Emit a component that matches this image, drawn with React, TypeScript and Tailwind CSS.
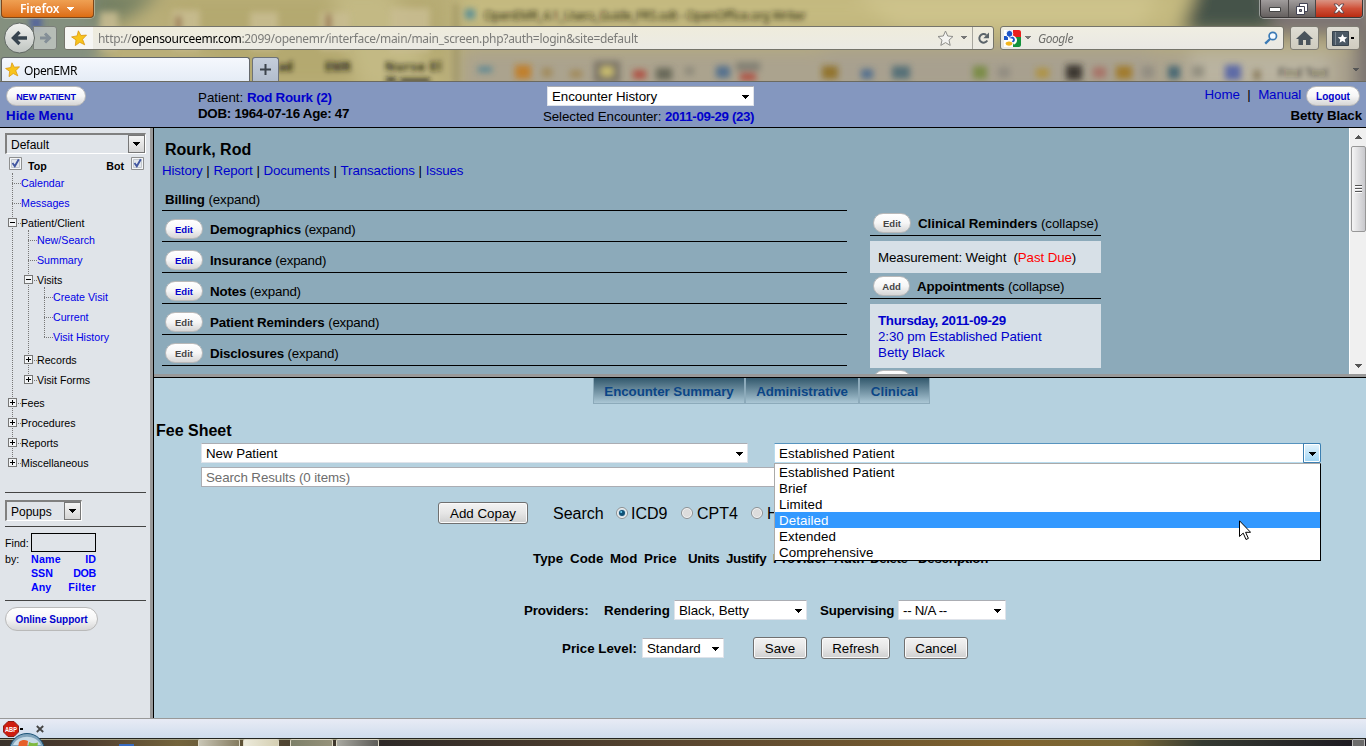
import type { ReactNode } from "react";
import clsx from "clsx";

type TreeNode = {
  label: string;
  link?: boolean;
  open?: boolean;
  children?: TreeNode[];
};

const menu: TreeNode[] = [
  { label: "Calendar", link: true },
  { label: "Messages", link: true },
  {
    label: "Patient/Client",
    open: true,
    children: [
      { label: "New/Search", link: true },
      { label: "Summary", link: true },
      {
        label: "Visits",
        open: true,
        children: [
          { label: "Create Visit", link: true },
          { label: "Current", link: true },
          { label: "Visit History", link: true },
        ],
      },
      { label: "Records", open: false },
      { label: "Visit Forms", open: false },
    ],
  },
  { label: "Fees", open: false },
  { label: "Procedures", open: false },
  { label: "Reports", open: false },
  { label: "Miscellaneous", open: false },
];

const sections = [
  { title: "Demographics", active: true },
  { title: "Insurance", active: true },
  { title: "Notes", active: true },
  { title: "Patient Reminders", active: false },
  { title: "Disclosures", active: false },
];

const visitLevels = ["Established Patient", "Brief", "Limited", "Detailed", "Extended", "Comprehensive"];

const Caret = ({ className }: { className?: string }) => (
  <svg className={clsx("shrink-0", className)} width="7" height="4" viewBox="0 0 7 4" shapeRendering="crispEdges">
    <path d="M0 0h7v1H0zM1 1h5v1H1zM2 2h3v1H2zM3 3h1v1H3z" fill="currentColor" />
  </svg>
);

const Star = ({ size }: { size: number }) => (
  <svg width={size} height={size} viewBox="0 0 16 16">
    <path
      d="M7.4.8l2.5 4.7 5.6-.4-4 4.200 2.200 5.500-4.900-2.500-4.500 3.300.7-5.700L.6 6.900l5.500-1z"
      fill="#f8c41c"
      stroke="#d9960c"
      strokeWidth=".8"
    />
  </svg>
);

const Pill = ({ children, className }: { children: ReactNode; className?: string }) => (
  <span
    className={clsx(
      "flex shrink-0 items-center justify-center whitespace-nowrap rounded-full border border-[#b9b9b9] bg-linear-to-b from-white via-[#f6f6f6] to-[#d6d6d6] font-bold",
      className,
    )}
  >
    {children}
  </span>
);

const Select = ({ children, className }: { children: ReactNode; className?: string }) => (
  <div
    className={clsx(
      "flex h-5 shrink-0 items-center justify-between rounded-[1px] border border-[#dfe3ea] border-t-[#abadb3] bg-white pr-1 pl-1 whitespace-nowrap",
      className,
    )}
  >
    <span className="pt-0.5 tracking-[-0.05px]">{children}</span>
    <Caret className="mt-px" />
  </div>
);

const Button = ({ children, className }: { children: ReactNode; className?: string }) => (
  <button
    className={clsx(
      "h-[22px] shrink-0 rounded-[3px] border border-[#707070] bg-linear-to-b from-[#f3f3f3] from-0% via-[#e6e6e6] via-50% to-[#cfcfcf] pt-px text-center leading-5 whitespace-nowrap shadow-[inset_0_0_0_1px_#fafafa]",
      className,
    )}
  >
    {children}
  </button>
);

const Radio = ({ checked, className }: { checked?: boolean; className?: string }) => (
  <svg className={clsx("shrink-0", className)} width="12" height="12" viewBox="0 0 12 12">
    <circle cx="6" cy="6" r="5.5" fill="#f4f4f4" stroke="#8b8f92" />
    <circle cx="6" cy="6" r="4" fill={checked ? "#c9dbe6" : "#dcdcdc"} />
    {checked && <circle cx="6" cy="6" r="3" fill="#0f5076" />}
    {checked && <circle cx="5.2" cy="5" r="1" fill="#6fd0f2" />}
  </svg>
);

const Check = () => (
  <svg width="13" height="13" viewBox="0 0 13 13">
    <path d="M.5.5h12v12H.5z" fill="#f4f6f8" stroke="#8e8f8f" />
    <path d="M2.5 2.5h8v8h-8z" fill="#e3e7ec" stroke="#c3c8ce" />
    <path d="M3.5 6l2.3 3.2L9.8 2.3" fill="none" stroke="#4257a0" strokeWidth="1.9" />
  </svg>
);

const Tree = ({ nodes, nested }: { nodes: TreeNode[]; nested?: boolean }) => (
  <ul className={clsx("relative", nested && "-mt-[3px] mb-[3px] ml-4")}>
    <li aria-hidden="true" className="absolute top-0 bottom-2.5 left-0 w-px border-l border-dotted border-[#777]" />
    {nodes.map((node) => (
      <li key={node.label}>
        <div className="relative flex h-5 items-center">
          <span className="w-[9px] border-t border-dotted border-[#777]" />
          {node.open !== undefined && (
            <svg className="absolute top-[5px] -left-1" width="9" height="9" viewBox="0 0 9 9" shapeRendering="crispEdges">
              <path d="M.5.5h8v8h-8z" fill="#f1f3f5" stroke="#777" />
              <path d={node.open ? "M2 4.5h5" : "M2 4.5h5M4.5 2v5"} stroke="#000" />
            </svg>
          )}
          <span className={clsx("whitespace-nowrap", node.link && "text-[#0000e6]")}>{node.label}</span>
        </div>
        {node.children && <Tree nodes={node.children} nested />}
      </li>
    ))}
  </ul>
);

// Aero glass: whatever sits behind the window, heavily blurred
const Glass = () => (
  <svg className="absolute inset-0" width="1366" height="82" viewBox="0 0 1366 82">
    <defs>
      <filter id="soft" x="-20%" y="-50%" width="140%" height="200%">
        <feGaussianBlur stdDeviation="9" />
      </filter>
      <filter id="smudge" x="-20%" y="-50%" width="140%" height="200%">
        <feGaussianBlur stdDeviation="3" />
      </filter>
      <filter id="type" x="-20%" y="-50%" width="140%" height="200%">
        <feGaussianBlur stdDeviation="2.6" />
      </filter>
    </defs>
    <path d="M0 0h1366v82H0z" fill="#b9ae78" />
    <g filter="url(#soft)">
      <path d="M-20-20H110L95 100H-20z" fill="#84907f" />
      <path d="M90-10h75l-40 30H90z" fill="#737f62" />
      <path d="M160 0h280v82H230z" fill="#b4a970" />
      <path d="M330-10h60l50 100h-80z" fill="#c3b984" />
      <path d="M460-10h740v40H460z" fill="#c5ba80" />
      <path d="M850-10h310l-20 40H900z" fill="#cdc38b" />
      <path d="M460 48h900v50H460z" fill="#aba38e" />
      <path d="M820 46h330v50H840z" fill="#a8a08f" />
      <path d="M1200-20h90v52h-110z" fill="#455349" />
      <path d="M1265-20h110v56h-100z" fill="#7b7373" />
      <path d="M1190 50h140v40h-140z" fill="#b9b3a0" />
      <path d="M1355 30h30v70h-30z" fill="#77706e" />
    </g>
    <g filter="url(#smudge)" opacity=".85">
      <path d="M30 16h12v14H30z" fill="#5060a0" />
      <path d="M100 12h18v38h-18zM172 10h28v40h-28zM250 12h28v38h-28zM320 12h30v38h-30zM390 8h40v44h-40z" fill="#c9bd92" />
      <path d="M176 16h5v26h-5zM326 14h5v28h-5z" fill="#8c5a35" />
      <path d="M465 9h10v10h-10z" fill="#4d8a9a" />
      <path d="M456 4v80" stroke="#8d8455" strokeWidth="3" />
      <path d="M478 67h14v5h-14z" fill="#3f7f96" />
      <path d="M515 65h16v14h-16z" fill="#c47a1b" />
      <path d="M542 68h10v9h-10zM570 70h12v8h-12z" fill="#a08652" />
      <path d="M594 61h26v22h-26z" fill="#736d60" />
      <path d="M601 67h12v9h-12z" fill="#d3c56a" />
      <path d="M633 70h13v9h-13zM740 73h16v8h-16z" fill="#b04438" />
      <path d="M736 62h24v9h-24z" fill="#7c7a70" />
      <path d="M656 68h16v12h-16z" fill="#5d5f51" />
      <path d="M685 67h9v8h-9z" fill="#888577" />
      <path d="M716 66h14v12h-14zM861 69h12v10h-12z" fill="#46698f" />
      <path d="M822 66h16v13h-16z" fill="#8e6d1d" />
      <path d="M892 66h18v13h-18z" fill="#496975" />
      <path d="M973 66h14v13h-14z" fill="#73893a" />
      <path d="M998 67h12v11h-12zM1142 66h12v12h-12z" fill="#8f8a80" />
      <path d="M1036 68h13v10h-13z" fill="#b09238" />
      <path d="M1066 65h16v15h-16z" fill="#2a2823" />
      <path d="M1093 67h13v11h-13z" fill="#a86d62" />
      <path d="M1116 66h16v13h-16z" fill="#a0761b" />
      <path d="M1168 66h12v13h-12z" fill="#3a6070" />
      <path d="M1192 66h12v11h-12z" fill="#8d8a7b" />
      <path d="M1225 65h16v15h-16z" fill="#4d5da8" />
      <path d="M1254 70h6v10h-6z" fill="#7b6a4a" />
    </g>
    <g filter="url(#type)" fontFamily="Noto Sans" fontSize="12" fill="#1f1c10">
      <text x="484" y="20" textLength="322">OpenEMR_4.1_Users_Guide_FR5.odt - OpenOffice.org Writer</text>
      <text x="278" y="71" fontWeight="bold">ad</text>
      <text x="325" y="71" fontWeight="bold">EMR</text>
      <text x="385" y="71" fontWeight="bold" textLength="56">Nurse El</text>
      <path d="M386 77h10v6h-10zM400 78h30v5h-30z" opacity=".7" />
      <text x="1278" y="77" opacity=".7">Find Text</text>
    </g>
  </svg>
);

const BrowserChrome = () => (
  <div className="relative h-[82px] shrink-0 overflow-hidden border-b border-[#6b6a60] font-['Noto_Sans','Open_Sans',sans-serif]">
    <Glass />
    <div className="relative flex h-full flex-col">
      <div className="flex h-[26px] items-start justify-between pr-[3px] pl-px">
        <div className="flex h-[18px] w-[93px] items-center rounded-b-[4px] border border-t-0 border-[#7d471b] bg-linear-to-b from-[#efa052] to-[#dd6d10] pl-[18px] text-[12px] font-semibold text-white shadow-[0_0_0_1px_#d8cfb088]">
          <span className="w-[47px] tracking-[-0.1px]">Firefox</span>
          <Caret />
        </div>
        <div className="flex h-[18px] w-[103px] overflow-hidden rounded-b-[4px] border border-t-0 border-[#3b3838] shadow-[0_0_0_1px_#ddd8]">
          <span className="flex w-7 items-center justify-center border-r border-[#4a4646] bg-linear-to-b from-[#a09c9c] to-[#65605f]">
            <svg width="12" height="6" viewBox="0 0 12 6"><path d="M.5 1.5h11v4H.5z" fill="#fff" stroke="#444" /></svg>
          </span>
          <span className="flex w-[27px] items-center justify-center border-r border-[#4a4646] bg-linear-to-b from-[#a09c9c] to-[#65605f]">
            <svg width="12" height="12" viewBox="0 0 12 12">
              <path d="M3.5.5h8v8h-8z" fill="#fff" stroke="#445" />
              <path d="M.5 3.5h8v8h-8z" fill="#fff" stroke="#445" />
              <path d="M3.5 6.5h2v2h-2z" fill="#888" stroke="#445" />
            </svg>
          </span>
          <span className="flex flex-1 items-center justify-center bg-linear-to-b from-[#d99484] via-[#cf5038] to-[#b92a10]">
            <svg width="12" height="11" viewBox="0 0 12 11">
              <path d="M1 1h3l2 2.4L8 1h3L7.8 5.4 11 10H8L6 7.5 4 10H1l3.2-4.6z" fill="#fff" stroke="#4b3a45" strokeWidth=".8" />
            </svg>
          </span>
        </div>
      </div>

      <div className="relative flex h-6 items-stretch pr-[6px] pl-[33px]">
        <div className="flex w-6 items-center justify-center rounded-r-[3px] border border-[#7b7f79] bg-[#c3c8c4cc]">
          <svg width="13" height="14" viewBox="0 0 13 14">
            <path d="M1 7h9M6 2.5L10.5 7 6 11.5" fill="none" stroke="#848f97" strokeWidth="3" />
          </svg>
        </div>
        <svg className="absolute -top-[4px] left-[4px]" width="32" height="32" viewBox="0 0 32 32">
          <defs>
            <linearGradient id="back" x1="0" y1="0" x2="0" y2="1">
              <stop offset="0" stopColor="#f2f3f1" />
              <stop offset="1" stopColor="#bfc4c0" />
            </linearGradient>
          </defs>
          <circle cx="15.5" cy="16" r="15" fill="url(#back)" stroke="#5f6662" />
          <path d="M23 16H11M15.5 10L9.5 16l6 6" fill="none" stroke="#37444f" strokeWidth="3.4" />
        </svg>

        <div className="ml-[7px] flex w-[930px] overflow-hidden rounded-[3px] border border-[#75746a] bg-linear-to-b from-[#efecdc] to-[#ebeae4]">
          <span className="flex w-7 items-center justify-center bg-[#f6f6f4]"><Star size={16} /></span>
          <span className="flex flex-1 items-center pt-0.5 pl-[5px] text-[12px] whitespace-nowrap text-[#7b7b78]">
            <span className="tracking-[-0.3px]">
              http://<span className="text-black">opensourceemr.com</span>:2099/openemr/interface/main/main_screen.php?auth=login&amp;site=default
            </span>
          </span>
          <span className="flex items-center gap-[7px] pr-[5px] text-[#777]">
            <svg width="17" height="17" viewBox="0 0 17 17">
              <path d="M8.5 1l2.2 5 5.3.5-4 3.6 1.2 5.3-4.7-2.8-4.7 2.8L5 10.1 1 6.5 6.3 6z" fill="#f3f3f1" stroke="#8d8d89" />
            </svg>
            <Caret className="w-[6px]" />
          </span>
          <span className="flex w-[21px] items-center justify-center border-l border-[#a7a69e]">
            <svg width="13" height="13" viewBox="0 0 13 13">
              <path d="M10.3 8.6A4.3 4.3 0 1 1 9.3 3" fill="none" stroke="#5b646a" strokeWidth="2" />
              <path d="M12 .5v5.7H6.3z" fill="#5b646a" />
            </svg>
          </span>
        </div>

        <div className="ml-[6px] flex w-[284px] items-center rounded-[3px] border border-[#75746a] bg-linear-to-b from-[#f0eee2] to-[#e9e8e4] pr-[5px] pl-[3px]">
          <svg width="17" height="17" viewBox="0 0 17 17">
            <path d="M0 0h17v17H0z" fill="#fff" />
            <path d="M9 0h6a2 2 0 0 1 2 2v5H9z" fill="#e8201c" />
            <path d="M9 7h8v8a2 2 0 0 1-2 2H9z" fill="#14923c" />
            <path d="M0 6h4v4H0z" fill="#1b55c8" />
            <path d="M5 7c6 0 8 4 4 6" fill="none" stroke="#fff" strokeWidth="4" />
            <path d="M5 7c6 0 6 4 3 5" fill="none" stroke="#1b55c8" strokeWidth="1.8" />
            <ellipse cx="5.5" cy="3.8" rx="3.3" ry="3.5" fill="#1b55c8" stroke="#fff" />
            <ellipse cx="5" cy="13.6" rx="3.8" ry="2.7" fill="#f4b51b" stroke="#fff" />
          </svg>
          <Caret className="ml-[4px] w-[6px] text-[#777]" />
          <span className="ml-[7px] flex-1 pt-0.5 text-[12px] tracking-[-0.45px] text-[#6f6f6c] italic">Google</span>
          <svg width="14" height="14" viewBox="0 0 14 14">
            <circle cx="8.8" cy="5" r="3.7" fill="#f6fbff" stroke="#3b7ab5" strokeWidth="1.7" />
            <path d="M6 8L1.2 12.7" stroke="#3b7ab5" strokeWidth="2.4" />
          </svg>
        </div>

        <div className="ml-[6px] flex w-[29px] items-center justify-center rounded-[3px] border border-[#7f7d74] bg-linear-to-b from-[#dfddd4] to-[#cfccbf]">
          <svg width="17" height="14" viewBox="0 0 17 14">
            <path d="M8.5 0L17 8h-2.5v6H10V9H7v5H2.5V8H0z" fill="#4a545c" />
          </svg>
        </div>
        <div className="ml-[7px] flex w-[34px] items-center justify-center gap-px rounded-[3px] border border-[#7f7d74] bg-linear-to-b from-[#dfddd4] to-[#cfccbf]">
          <svg width="17" height="15" viewBox="0 0 17 15">
            <path d="M.5.5h16v14H.5z" fill="#4a5864" stroke="#39444d" />
            <path d="M3.5 1v13" stroke="#7d8790" />
            <path d="M10.5 3l1.4 3 3.3.3-2.5 2.2.8 3.2-3-1.8-3 1.8.8-3.2-2.5-2.2 3.3-.3z" fill="#fff" />
          </svg>
          <Caret className="w-[5px]" />
        </div>
      </div>

      <div className="mt-[7px] flex flex-1 items-stretch justify-between pr-[7px] pl-px">
        <div className="flex gap-[2px]">
          <div className="flex w-[249px] items-center gap-[4px] rounded-t-[3px] border border-b-0 border-[#64686c] bg-linear-to-b from-[#f5f8fd] to-[#e5ecf6] pl-[3px] text-[12px] text-black">
            <Star size={15} />
            <span className="pt-0.5 tracking-[-0.4px]">OpenEMR</span>
          </div>
          <div className="flex w-[27px] items-center justify-center rounded-t-[3px] border border-b-0 border-[#6d7278] bg-linear-to-b from-[#c5cedb] to-[#b2bdcd]">
            <svg width="11" height="11" viewBox="0 0 11 11"><path d="M0 5.5h11M5.5 0v11" stroke="#3d444c" strokeWidth="2" /></svg>
          </div>
        </div>
        <Caret className="mt-[11px] w-[6px] text-[#555]" />
      </div>
    </div>
  </div>
);

const Header = () => (
  <header className="flex h-[46px] shrink-0 items-start border-b border-black bg-[#8497bf]">
    <div className="w-[198px] pt-1 pl-1.5">
      <Pill className="h-5 w-20 pt-px text-[9px] tracking-[-0.1px] text-[#0000cc]">NEW PATIENT</Pill>
      <div className="mt-[2px] leading-4 font-bold text-[#0000cc]">Hide Menu</div>
    </div>
    <div className="w-[345px] pt-[8px] leading-4">
      <div>Patient: <b className="tracking-[-0.25px] text-[#0000cc]">Rod Rourk (2)</b></div>
      <div className="font-bold tracking-[-0.27px]">DOB: 1964-07-16 Age: 47</div>
    </div>
    <div className="flex-1 pt-1">
      <Select className="ml-1 w-[207px]">Encounter History</Select>
      <div className="mt-[3px] leading-4">
        <span className="tracking-[-0.09px]">Selected Encounter: </span>
        <b className="tracking-[-0.38px] text-[#0000cc]">2011-09-29 (23)</b>
      </div>
    </div>
    <div className="flex flex-col items-end pt-[4px] pr-1">
      <div className="-mr-[1px] flex h-5 items-start">
        <span className="pt-px tracking-[-0.1px] text-[#0000cc]">Home</span>
        <span className="mx-[7.5px] pt-px">|</span>
        <span className="pt-px tracking-[-0.15px] text-[#0000cc]">Manual</span>
        <Pill className="mr-[3px] ml-[5px] h-5 w-[54px] pt-px text-[10px] text-[#0000cc]">Logout</Pill>
      </div>
      <div className="mt-[2px] leading-4 font-bold tracking-[-0.1px]">Betty Black</div>
    </div>
  </header>
);

const NativeSelect = ({ label, className }: { label: string; className?: string }) => (
  <div className={clsx("flex h-[21px] items-stretch justify-between border-t-2 border-r border-b border-l-2 border-t-[#808080] border-r-white border-b-white border-l-[#808080] pl-1 text-[12px]", className)}>
    <span className="self-center pt-0.5">{label}</span>
    <span className="flex w-[17px] items-center justify-center border border-[#777] bg-linear-to-b from-[#f5f5f5] to-[#d5d5d5]"><Caret /></span>
  </div>
);

const Sidebar = () => (
  <aside className="w-[150px] shrink-0 bg-[#e0e4e9] pl-[5px] text-[10.67px] leading-[14px]">
    <NativeSelect label="Default" className="mt-[5px] w-[141px]" />
    <div className="mt-[3px] flex h-[16px] w-[139px] items-start justify-between pl-1 font-bold">
      <span className="flex gap-[6px]"><Check /><span className="pt-[2px]">Top</span></span>
      <span className="flex gap-[7px]"><span className="pt-[2px]">Bot</span><Check /></span>
    </div>
    <div className="pl-[7px]"><Tree nodes={menu} /></div>
    <div className="mt-[19px] w-[141px] border-t border-[#444]" />
    <NativeSelect label="Popups" className="mt-[7px] w-[77px]" />
    <div className="mt-[5px] w-[141px] border-t border-[#444]" />
    <div className="mt-[6px] flex h-[19px] items-center">
      <span className="w-[26px]">Find:</span>
      <span className="h-[19px] w-[65px] border border-black" />
    </div>
    <div className="flex">
      <span className="w-[26px]">by:</span>
      <div className="grid w-[65px] grid-cols-2 font-bold text-[#0000ff]">
        <span className="tracking-[0.25px]">Name</span><span className="text-right">ID</span>
        <span>SSN</span><span className="text-right tracking-[-0.3px]">DOB</span>
        <span>Any</span><span className="text-right tracking-[0.3px]">Filter</span>
      </div>
    </div>
    <div className="mt-[6px] w-[141px] border-t border-[#444]" />
    <Pill className="mt-[6px] h-6 w-[93px] pt-px text-[10px] text-[#0000cc]">Online Support</Pill>
  </aside>
);

const Section = ({ title, active }: { title: string; active: boolean }) => (
  <div className="flex h-[31px] items-start border-b border-black pt-2 pl-[3px]">
    <Pill className={clsx("h-5 w-[38px] pt-px text-[9.5px]", active ? "text-[#0000cc]" : "text-[#444]")}>Edit</Pill>
    <span className="ml-[7px] pt-[3px]"><b className="tracking-[-0.14px]">{title}</b><span className="tracking-[-0.2px]"> (expand)</span></span>
  </div>
);

const Bar = () => <i className="text-black not-italic">|</i>;

const PatientSummary = () => (
  <section className="flex h-[246px] shrink-0 overflow-hidden bg-[#8caaba]">
    <div className="ml-2 w-[685px]">
      <h1 className="mt-[13px] ml-[3px] text-[16px] leading-[18px] font-bold">Rourk, Rod</h1>
      <div className="mt-[3px] flex gap-[3.8px] leading-[17px] tracking-[-0.14px] text-[#0000cc]">
        <span>History</span><Bar />
        <span>Report</span><Bar />
        <span>Documents</span><Bar />
        <span>Transactions</span><Bar />
        <span>Issues</span>
      </div>
      <div className="flex h-[32px] items-end border-b border-black pb-[2px] pl-[3px] leading-4"><span className="tracking-[-0.12px]"><b>Billing</b> (expand)</span></div>
      {sections.map((s) => <Section key={s.title} {...s} />)}
    </div>
    <div className="ml-[23px] w-[231px] pt-[85px]">
      <div className="flex h-[23px] items-start border-b border-black pl-[3px]">
        <Pill className="h-5 w-[38px] pt-px text-[9.5px] text-[#444]">Edit</Pill>
        <span className="ml-[7px] leading-[22px] tracking-[-0.04px] whitespace-nowrap"><b>Clinical Reminders</b> (collapse)</span>
      </div>
      <div className="mt-[5px] h-8 bg-[#d7e0e7] pl-2 leading-[34px] tracking-[-0.1px] whitespace-pre">
        Measurement: Weight  (<span className="text-[#ff0000]">Past Due</span>)
      </div>
      <div className="mt-[3px] flex h-[23px] items-start border-b border-black pl-[3px]">
        <Pill className="h-5 w-[37px] pt-px text-[9.5px] text-[#444]">Add</Pill>
        <span className="ml-[7px] leading-[22px] tracking-[-0.17px]"><b>Appointments</b> (collapse)</span>
      </div>
      <div className="mt-[5px] h-16 bg-[#d7e0e7] pt-[9px] pl-2 leading-4 text-[#0000cc]">
        <b className="tracking-[-0.3px]">Thursday, 2011-09-29</b>
        <div className="tracking-[-0.09px]">2:30 pm Established Patient</div>
        <div>Betty Black</div>
      </div>
      <Pill className="mt-[2px] ml-[3px] h-5 w-[38px]">{" "}</Pill>
    </div>
    <div className="ml-auto flex w-[17px] flex-col items-center border-l border-white bg-[#f0f0f0]">
      <Caret className="mt-[7px] rotate-180 text-[#555]" />
      <div className="mt-[7px] flex h-[86px] w-[15px] flex-col items-center justify-center gap-px rounded-[2px] border border-[#979797] bg-linear-to-r from-[#f5f5f5] to-[#c8c8cc]">
        <span className="h-[2px] w-[7px] border-b border-white bg-[#555]" />
        <span className="h-[2px] w-[7px] border-b border-white bg-[#555]" />
        <span className="h-[2px] w-[7px] border-b border-white bg-[#555]" />
      </div>
      <Caret className="mt-auto mb-[6px] text-[#555]" />
    </div>
  </section>
);

const Tab = ({ children, className }: { children: ReactNode; className?: string }) => (
  <span className={clsx("flex h-[26px] items-center justify-center border border-t-0 border-[#8caaba] bg-linear-to-b from-[#33596d] to-[#abc7d5] pt-0.5 font-bold whitespace-nowrap text-[#0b4586]", className)}>
    {children}
  </span>
);

const FeeSheet = () => (
  <section className="flex-1 bg-[#b5d1df]">
    <div className="ml-[439px] flex">
      <Tab className="w-[152px] tracking-[-0.06px]">Encounter Summary</Tab>
      <Tab className="w-[114px] tracking-[-0.06px]">Administrative</Tab>
      <Tab className="w-[71px]">Clinical</Tab>
    </div>
    <h2 className="mt-[18px] ml-[2px] text-[16px] leading-[18px] font-bold">Fee Sheet</h2>
    <div className="relative mt-[3px] ml-[47px] flex">
      <Select className="w-[547px]">New Patient</Select>
      <div className="ml-[26px] flex h-5 w-[547px] items-stretch justify-between border border-[#b8dcef] border-t-[#5794bf] bg-white pl-1">
        <span className="self-center pt-0.5 tracking-[0.08px]">Established Patient</span>
        <span className="-my-px -mr-px flex w-[18px] items-center justify-center rounded-r-[2px] border border-[#3c7fb1] bg-linear-to-b from-[#e5f4fc] to-[#9fd5f5] shadow-[inset_0_0_0_1px_#fff]"><Caret className="mt-px" /></span>
      </div>
      {/* open dropdown of the code level select */}
      <div className="absolute top-5 left-[573px] z-10 w-[547px] border border-t-[#aaa] border-r-black border-b-black border-l-[#aaa] bg-white">
        {visitLevels.map((level) => (
          <div key={level} className={clsx("h-4 pl-1 leading-[18px] tracking-[0.08px]", level === "Detailed" && "bg-[#3399ff] text-white")}>{level}</div>
        ))}
        <svg className="absolute top-[56px] left-[464px]" width="12" height="21" viewBox="0 0 12 21">
          <path d="M.5.8v15.7l3.7-3.4 2.8 6.4 2.4-1.1-2.8-6.1h5z" fill="#fff" stroke="#000" />
        </svg>
      </div>
    </div>
    <div className="mt-[4px] ml-[47px] h-5 w-[1120px] border border-[#abadb3] bg-white pl-1 leading-[19px] tracking-[-0.08px] text-[#6d6d6d]">Search Results (0 items)</div>
    <div className="mt-[15px] ml-[284px] flex items-center text-[16px]">
      <Button className="w-[90px] text-[13.33px]">Add Copay</Button>
      <span className="ml-[25px] w-[63px] pt-0.5">Search</span>
      <Radio checked />
      <span className="ml-[3px] w-[50px] pt-0.5">ICD9</span>
      <Radio />
      <span className="ml-[4px] w-[54px] pt-0.5">CPT4</span>
      <Radio />
      <span className="ml-[4px] pt-0.5">HCPCS</span>
    </div>
    <div className="mt-[27px] ml-[379px] flex leading-4 font-bold">
      <span className="w-[37px]">Type</span>
      <span className="w-[40px]">Code</span>
      <span className="w-[34px]">Mod</span>
      <span className="w-[44px]">Price</span>
      <span className="w-[38px] tracking-[-0.4px]">Units</span>
      <span className="w-[47px] tracking-[-0.4px]">Justify</span>
      <span className="w-[61px]">Provider</span>
      <span className="w-[36px]">Auth</span>
      <span className="w-[48px] tracking-[-0.4px]">Delete</span>
      <span className="tracking-[-0.3px]">Description</span>
    </div>
    <div className="mt-[33px] ml-[370px] flex items-center">
      <b className="w-[80px] pt-0.5 tracking-[-0.15px]">Providers:</b>
      <b className="w-[70px] pt-0.5">Rendering</b>
      <Select className="w-[133px]">Black, Betty</Select>
      <b className="ml-[13px] w-[78px] pt-0.5 tracking-[-0.2px]">Supervising</b>
      <Select className="w-[108px]"><span className="tracking-[-0.3px]">-- N/A --</span></Select>
    </div>
    <div className="mt-[17px] ml-[408px] flex items-center">
      <b className="w-[80px] pt-0.5">Price Level:</b>
      <Select className="w-[82px]">Standard</Select>
      <Button className="ml-[29px] w-[54px]">Save</Button>
      <Button className="ml-[14px] w-[69px]">Refresh</Button>
      <Button className="ml-[14px] w-[64px]">Cancel</Button>
    </div>
  </section>
);

const StatusBar = () => (
  <footer className="flex h-5 shrink-0 items-center border-t border-[#999] bg-linear-to-b from-[#e8ebf5] to-[#cfdded] pl-[3px]">
    <svg width="16" height="16" viewBox="0 0 16 16">
      <path d="M5 .5h6L15.5 5v6L11 15.5H5L.5 11V5z" fill="#cf1d10" stroke="#8e1d14" />
      <text x="2" y="11" fontFamily="Liberation Sans" fontWeight="bold" fontSize="8" textLength="12" lengthAdjust="spacingAndGlyphs" fill="#fff">ABP</text>
    </svg>
    <Caret className="w-[5px]" />
    <svg className="ml-[12px]" width="8" height="8" viewBox="0 0 8 8">
      <path d="M.8 1l6.4 6M7.2 1L.8 7" stroke="#444" strokeWidth="1.8" />
    </svg>
  </footer>
);

const TaskButton = ({ className }: { className?: string }) => (
  <span className={clsx("h-[7px] rounded-t-[2px] border border-b-0 border-[#ddd8c4] bg-linear-to-r", className)} />
);

const Taskbar = () => (
  <div className="relative h-2 shrink-0 border-t border-[#23251f] bg-[#453820]">
    <svg className="absolute inset-0" width="1366" height="7" viewBox="0 0 1366 7">
      <defs>
        <linearGradient id="bar">
          <stop offset="0" stopColor="#3a332c" />
          <stop offset=".06" stopColor="#4d3b2e" />
          <stop offset=".13" stopColor="#74643c" />
          <stop offset=".28" stopColor="#2f2a28" />
          <stop offset=".5" stopColor="#5a4630" />
          <stop offset=".74" stopColor="#7f632f" />
          <stop offset=".83" stopColor="#776737" />
          <stop offset=".88" stopColor="#353a32" />
          <stop offset="1" stopColor="#1b1820" />
        </linearGradient>
      </defs>
      <path d="M0 0h1366v7H0z" fill="url(#bar)" />
      <path d="M0 .5h1352" stroke="#a5a287" />
      <path d="M119 5h15v2h-15z" fill="#376ac0" />
      <path d="M1352.5.5h12v8h-12z" fill="#6c6c6c" stroke="#bbb" />
    </svg>
    <div className="relative flex pl-[198px]">
      <TaskButton className="w-[42px] from-[#c9c6b6] to-[#857c60]" />
      <TaskButton className="ml-[3px] w-[36px] from-[#eceadb] to-[#d5cfb2]" />
      <TaskButton className="ml-[11px] w-[43px] from-[#7d8069] to-[#96927a]" />
      <TaskButton className="ml-[3px] w-[43px] from-[#a9a9a1] to-[#5d5c58]" />
    </div>
    <svg className="absolute -top-[6px] left-[9px]" width="36" height="14" viewBox="0 0 36 14">
      <circle cx="18" cy="18" r="17.5" fill="#7fa3bb" stroke="#1d5478" />
      <path d="M4 12C9 1 27 1 32 12z" fill="#c6dae6" />
      <path d="M10 9c3-2.5 6-2.5 9-1l-1 7h-9z" fill="#e6602a" />
      <path d="M20 9c3 1.5 6 1.5 9 .5l-1 6h-9z" fill="#7fb93f" />
    </svg>
  </div>
);

export default function App() {
  return (
    <div className="flex h-[746px] w-[1366px] flex-col overflow-hidden bg-[#b5d1df] font-['Liberation_Sans',Arial,sans-serif] text-[13.33px] leading-4 text-black">
      <BrowserChrome />
      <Header />
      <main className="flex min-h-0 flex-1">
        <Sidebar />
        <div className="w-1 shrink-0 border-r border-black bg-[#999]" />
        <div className="flex min-w-0 flex-1 flex-col">
          <PatientSummary />
          <div className="h-1 shrink-0 border-b border-black bg-[#999]" />
          <FeeSheet />
        </div>
      </main>
      <StatusBar />
      <Taskbar />
    </div>
  );
}
